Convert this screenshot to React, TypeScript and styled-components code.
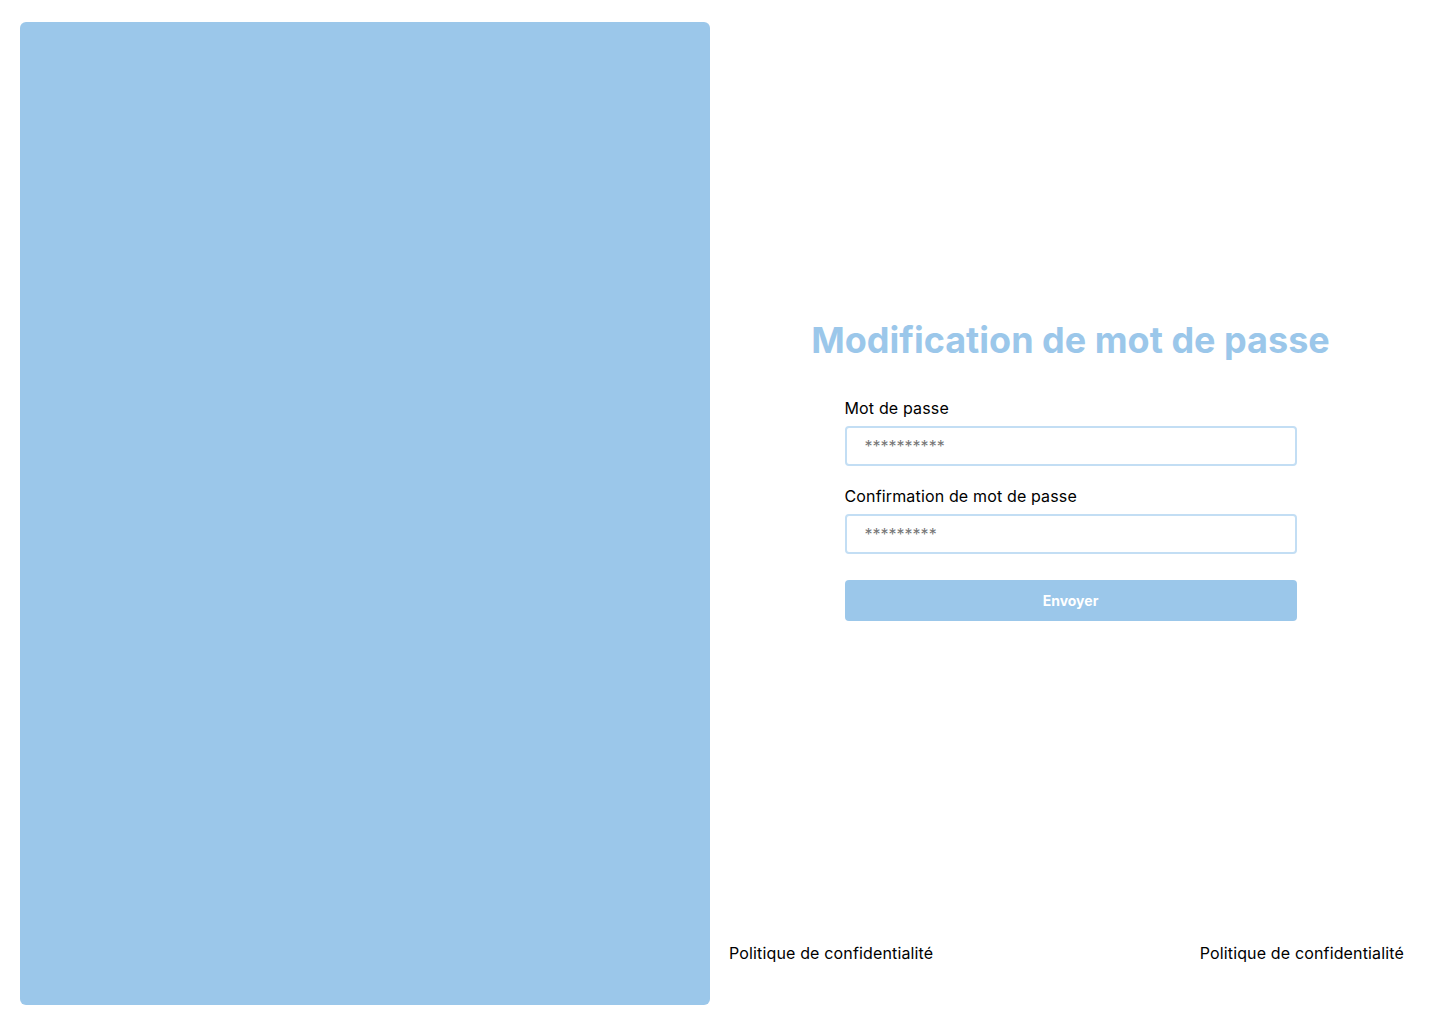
import styled, { createGlobalStyle } from "styled-components";

const GlobalStyle = createGlobalStyle`
  * { box-sizing: border-box; }
  body {
    margin: 0;
    font-family: Inter, "Noto Sans", sans-serif;
    background: #ffffff;
    color: #000000;
  }
`;

export default function App() {
  return (
    <Page>
      <GlobalStyle />
      <SidePanel />
      <Content>
        <Center>
          <Title>Modification de mot de passe</Title>
          <Form onSubmit={(e) => e.preventDefault()}>
            <Field>
              <Label htmlFor="pwd">Mot de passe</Label>
              <Input id="pwd" type="text" placeholder="**********" />
            </Field>
            <Field>
              <Label htmlFor="pwd2">Confirmation de mot de passe</Label>
              <Input id="pwd2" type="text" placeholder="*********" />
            </Field>
            <Submit type="submit">Envoyer</Submit>
          </Form>
        </Center>
        <Footer>
          <FooterLink>Politique de confidentialité</FooterLink>
          <FooterLink>Politique de confidentialité</FooterLink>
        </Footer>
      </Content>
    </Page>
  );
}

const Page = styled.div`
  display: flex;
  height: 1024px;
  padding: 22px 28px 19px 20px;
  gap: 19px;
`;

const SidePanel = styled.div`
  width: 690px;
  flex-shrink: 0;
  background: #9bc7ea;
  border-radius: 6px;
`;

const Content = styled.div`
  flex: 1;
  display: flex;
  flex-direction: column;
`;

const Center = styled.div`
  flex: 1;
  display: flex;
  flex-direction: column;
  align-items: center;
  padding-top: 296px;
`;

const Title = styled.h1`
  margin: 0 0 36px;
  font-size: 36px;
  font-weight: 700;
  line-height: 44px;
  color: #9bc7ea;
`;

const Form = styled.form`
  width: 452px;
  display: flex;
  flex-direction: column;
  gap: 20px;
`;

const Field = styled.div`
  display: flex;
  flex-direction: column;
  gap: 8px;
`;

const Label = styled.label`
  font-size: 16px;
  line-height: 20px;
  letter-spacing: 0.15px;
  color: #000000;
`;

const Input = styled.input`
  height: 40px;
  border: 2px solid #c3def4;
  border-radius: 4px;
  padding: 0 18px;
  font-family: inherit;
  font-size: 16px;
  outline: none;
  &::placeholder {
    color: #777777;
  }
`;

const Submit = styled.button`
  margin-top: 6px;
  height: 41px;
  border: none;
  border-radius: 4px;
  background: #9bc7ea;
  color: #ffffff;
  font-family: inherit;
  font-size: 14px;
  font-weight: 700;
  cursor: pointer;
`;

const Footer = styled.div`
  display: flex;
  justify-content: space-between;
  padding: 0 8px 42px 0;
`;

const FooterLink = styled.a`
  font-size: 16px;
  line-height: 20px;
  letter-spacing: 0.15px;
  color: #000000;
  cursor: pointer;
`;
